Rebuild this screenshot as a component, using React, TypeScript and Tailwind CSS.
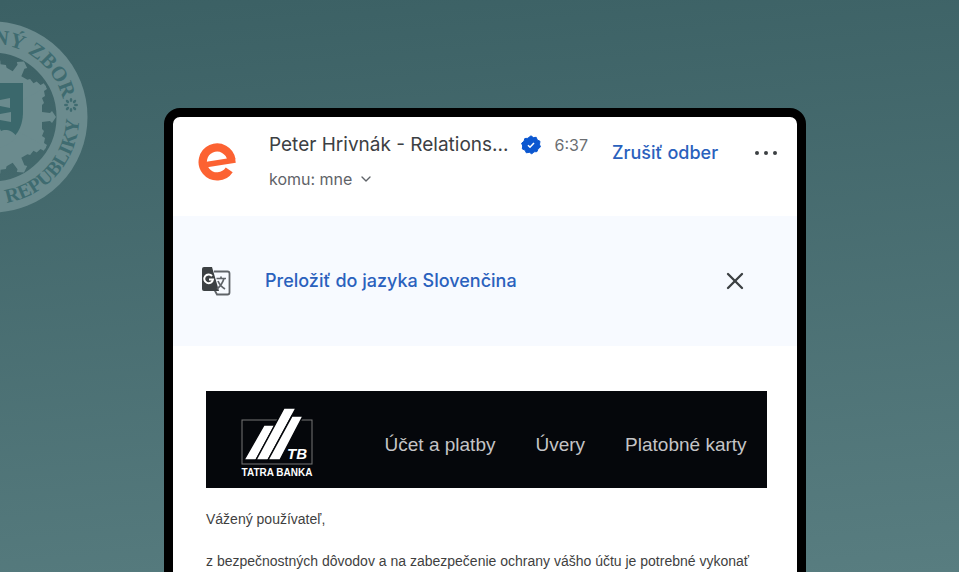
import { ChevronDown, X } from 'lucide-react';

const navItems = ['Účet a platby', 'Úvery', 'Platobné karty'];

const sides = [0, 60, 120, 180, 240, 300];
const petals = [0, 45, 90, 135, 180, 225, 270, 315];

function PoliceEmblem() {
  return (
    <svg viewBox="-96 -96 192 192" className="absolute top-[21px] -left-[104px] size-[192px]" aria-hidden="true">
      <circle r="80" fill="none" stroke="#6b8b8e" strokeWidth="31" />

      {/* Star */}
      {sides.map((deg) => (
        <g key={deg} fill="#6b8b8e" transform={`rotate(${deg})`}>
          <path d="M0 0 L53 -32 L55 -28 L52 -26 L53 -21 L50 -19 L52 -14 L50 -12 L50 -5 L58 -4 L60 -6 L64 0 L60 6 L58 4 L50 5 L50 12 L52 14 L50 19 L53 21 L52 26 L55 28 L53 32 Z" />
        </g>
      ))}

      {/* Shield with double cross and hills */}
      <path d="M-31 -34 H31 V-6 C31 14 22 24 0 33 C-22 24 -31 14 -31 -6 Z" fill="#3b686c" />
      <path
        d="M-3 -28 H3 V-16 L18 -19 V-9 L3 -12 V-2 L19 -5 V5 L3 2 V16 H-3 V2 L-19 5 V-5 L-3 -2 V-12 L-18 -9 V-19 L-3 -16 Z"
        fill="#6b8b8e"
      />
      <path d="M-25 20 C-20 12 -12 12 -9 14 C-6 6 6 6 9 14 C12 12 20 12 25 20 C18 27 10 31 0 34 C-10 31 -18 27 -25 20 Z" fill="#6b8b8e" />

      {/* Lettering on the ring */}
      <path id="arcTop" d="M-73 0 A73 73 0 0 1 73 0" fill="none" />
      <path id="arcBottom" d="M-87 0 A87 87 0 0 0 87 0" fill="none" />
      <g fill="#3f6b70" fontFamily="'Liberation Serif', serif" fontWeight="700">
        <text fontSize="21" textAnchor="end">
          <textPath href="#arcTop" startOffset="92%">NÝ ZBOR</textPath>
        </text>
        <text fontSize="20" textAnchor="end">
          <textPath href="#arcBottom" startOffset="99%">REPUBLIKY</textPath>
        </text>
      </g>
      <g fill="#3f6b70" transform="translate(79 -12)">
        {petals.map((deg) => (
          <ellipse key={deg} cx="5" rx="2" ry="1.3" transform={`rotate(${deg})`} />
        ))}
      </g>
    </svg>
  );
}

function SenderLogo() {
  return (
    <svg viewBox="0 0 36 36" className="size-10" aria-hidden="true">
      <g fill="none" stroke="#fc6232">
        <path d="M31 17 A13 13 0 1 0 29 26" strokeWidth="7.5" />
        <path d="M6 21.5 L34.5 17" strokeWidth="5" />
      </g>
    </svg>
  );
}

function VerifiedBadge() {
  return (
    <svg viewBox="0 0 20 20" className="size-5 shrink-0" aria-hidden="true">
      <path
        d="M10 .8 12.3 2.6 15.2 2.3 16.3 5 19 6.3 18.5 9.2 19.4 12 17 13.8 16 16.6 13.1 16.8 10.8 18.8 8.3 17.3 5.3 17.8 4 15.1 1.3 13.9 1.7 11 .6 8.2 3 6.3 3.8 3.5 6.8 3.3Z"
        fill="#0b57d0"
        stroke="#0b57d0"
        strokeLinejoin="round"
      />
      <path d="M7 10.2 9 12.2 13 8" fill="none" stroke="#fff" strokeWidth="1.6" />
    </svg>
  );
}

function TranslateIcon() {
  return (
    <svg viewBox="0 0 30 30" className="size-[30px]" aria-hidden="true">
      <path d="M13 5.5 H26.5 Q28.5 5.5 28.5 7.5 V26.5 Q28.5 28.5 26.5 28.5 H16 L13 23" fill="none" stroke="#5f6368" strokeWidth="1.8" />
      <path d="M3 1 H11 L18 25 H3 Q1 25 1 23 V3 Q1 1 3 1 Z" fill="#3c4043" />
      <path d="M11 10 A4.4 4.4 0 1 0 12 13.4 H8" fill="none" stroke="#fff" strokeWidth="2" />
      <path d="M15.5 12.5 H25 M20 10.5 V12.5 M23 12.5 Q21 19 16 23 M17 15 Q19 20 24 23" fill="none" stroke="#5f6368" strokeWidth="1.7" />
    </svg>
  );
}

function BankLogo() {
  return (
    <svg viewBox="0 0 74 72" className="h-[72px] w-[74px]" role="img" aria-label="Tatra banka">
      <rect x="2" y="13" width="70" height="44" fill="none" stroke="#777" strokeWidth="1" />
      <g fill="#fff" stroke="#05070b" strokeWidth="1.5">
        <path d="M4 53 L24 18 H35 L16 53 Z" />
        <path d="M16 53 L44 1 H56 L28 53 Z" />
        <path d="M28 53 L52 9 H63 L40 53 Z" />
      </g>
      <g fill="#fff" fontFamily="'Liberation Sans', sans-serif" fontWeight="700">
        <text x="47" y="52" fontSize="15" fontStyle="italic">TB</text>
        <text x="37" y="69" fontSize="10" textAnchor="middle">TATRA BANKA</text>
      </g>
    </svg>
  );
}

export default function App() {
  return (
    <main className="relative h-screen overflow-hidden bg-linear-[175deg,#3b6064,#587d80] pt-27 pr-[16%] pl-41">
      <PoliceEmblem />

      <article className="relative min-h-screen overflow-hidden rounded-2xl border-[9px] border-black bg-white font-['Inter',sans-serif]">
        {/* Message header */}
        <header className="flex h-[99px] items-start pr-5 pl-6">
          <div className="mt-6 w-[72px] shrink-0">
            <SenderLogo />
          </div>
          <div className="mt-4 min-w-0">
            <div className="flex items-center">
              <h1 className="truncate text-[19px] leading-6 text-[#3c4043]">Peter Hrivnák - Relations...</h1>
              <span className="ml-3">
                <VerifiedBadge />
              </span>
              <time className="ml-3.5 text-base text-[#6b6e72]">6:37</time>
            </div>
            <button className="mt-2.5 flex items-center gap-1.5 text-base text-[#5f6368]">
              komu: mne
              <ChevronDown className="size-4" />
            </button>
          </div>
          <button className="mt-6 ml-6 shrink-0 text-lg leading-6 font-medium text-[#2a61bd]">Zrušiť odber</button>
          <button className="mt-8 ml-auto flex gap-[5px] py-0.5" aria-label="Viac">
            <span className="size-1 rounded-full bg-[#3c4043]" />
            <span className="size-1 rounded-full bg-[#3c4043]" />
            <span className="size-1 rounded-full bg-[#3c4043]" />
          </button>
        </header>

        {/* Translate bar */}
        <section className="flex h-[130px] items-center bg-[#f7faff] pr-12 pl-7">
          <TranslateIcon />
          <button className="ml-8.5 text-lg font-medium text-[#2a61bd]">Preložiť do jazyka Slovenčina</button>
          <button className="ml-auto" aria-label="Zavrieť">
            <X className="size-7 text-[#3c4043]" strokeWidth={2} />
          </button>
        </section>

        {/* Mail body */}
        <div className="pt-[45px] pr-[30px] pl-[33px] font-['Liberation_Sans',sans-serif] text-[#3f3f3f]">
          <div className="flex h-[97px] items-center justify-between bg-[#05070b] pt-1.5 pr-5 pl-[34px]">
            <BankLogo />
            <nav className="flex gap-10 pt-1.5 text-[19px] text-[#c4c4c6]">
              {navItems.map((item) => (
                <a key={item} href="#">
                  {item}
                </a>
              ))}
            </nav>
          </div>
          <p className="mt-5 text-sm leading-[22px]">Vážený používateľ,</p>
          <p className="mt-5 text-sm leading-[22px] whitespace-nowrap">
            z bezpečnostných dôvodov a na zabezpečenie ochrany vášho účtu je potrebné vykonať
          </p>
        </div>
      </article>
    </main>
  );
}
